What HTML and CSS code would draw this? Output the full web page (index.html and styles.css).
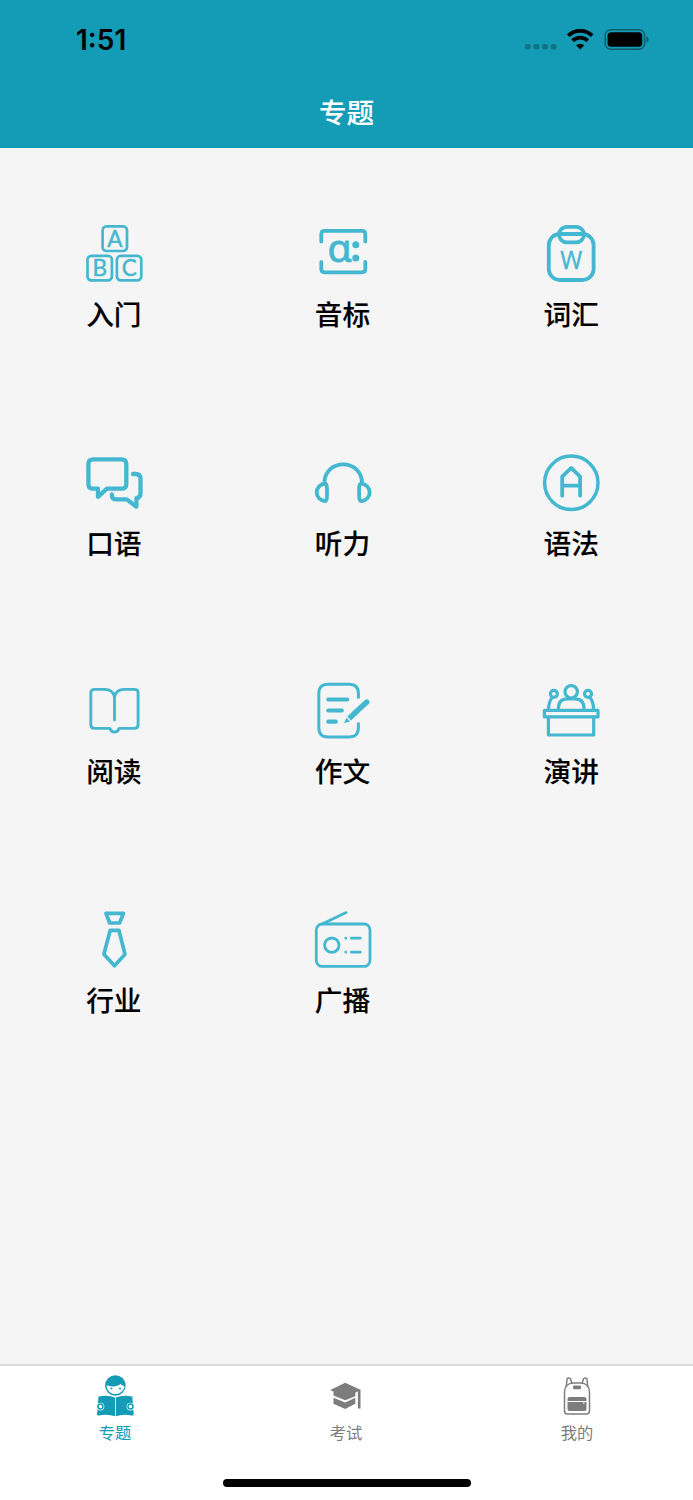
FILE: index.html
```html
<!DOCTYPE html>
<html lang="zh-CN">
<head>
    <meta charset="UTF-8">
    <meta name="viewport" content="width=device-width, initial-scale=1.0">
    <title>专题</title>
    <link rel="stylesheet" href="styles.css">
</head>
<body>
    <header>
        <div class="status-bar">
            <span class="time">1:51</span>
            <svg class="status-icons" width="126" height="24" viewBox="0 0 126 24">
                <g class="signal">
                    <rect x="2" y="16" width="5.6" height="5.4" rx="1.6"/>
                    <rect x="10.6" y="16" width="5.6" height="5.4" rx="1.6"/>
                    <rect x="19.2" y="16" width="5.6" height="5.4" rx="1.6"/>
                    <rect x="27.8" y="16" width="5.6" height="5.4" rx="1.6"/>
                </g>
                <g class="wifi">
                    <path d="M45.2 7.6a17.5 17.5 0 0 1 24 0"/>
                    <path d="M49.6 12.6a11 11 0 0 1 15.2 0"/>
                    <path class="solid" d="M57.2 21.4l-4-4.1a5.7 5.7 0 0 1 8 0z"/>
                </g>
                <rect class="battery" x="82.2" y="1.8" width="39.4" height="19.4" rx="5.6"/>
                <rect x="84.6" y="4.2" width="34.6" height="14.6" rx="3.6"/>
                <path class="nub" d="M123.4 8.2q2.2 1 2.2 3.3t-2.2 3.3z"/>
            </svg>
        </div>
        <h1>专题</h1>
    </header>

    <!-- Topics -->
    <main class="grid">
        <a class="topic">
            <svg viewBox="0 0 57 57" stroke-width="2.7">
                <rect x="16.6" y="1.4" width="24.4" height="24.6" rx="3.8"/>
                <rect x="1.5" y="30.8" width="24.4" height="24.6" rx="3.8"/>
                <rect x="30.9" y="30.8" width="24.4" height="24.6" rx="3.8"/>
                <text class="block-letter" x="28.8" y="22">A</text>
                <text class="block-letter" x="13.7" y="50.8">B</text>
                <text class="block-letter" x="43.2" y="50.8">C</text>
            </svg>
            <span>入门</span>
        </a>
        <a class="topic">
            <svg viewBox="0 0 57 57" stroke-width="3.8">
                <path d="M6.3 16.6V9.2q0-3.3 3.3-3.3h37.4q3.3 0 3.3 3.3v7.4M6.3 36.8v7.3q0 3.3 3.3 3.3h37.4q3.3 0 3.3-3.3v-7.3"/>
                <text class="alpha" x="24.5" y="37.4">ɑ</text>
                <circle class="fill" cx="40.8" cy="19.8" r="3.5"/>
                <circle class="fill" cx="40.8" cy="33" r="3.5"/>
            </svg>
            <span>音标</span>
        </a>
        <a class="topic">
            <svg viewBox="0 0 57 57" stroke-width="3.8">
                <rect x="5.8" y="9" width="44.8" height="46" rx="11"/>
                <rect x="16.1" y="1.9" width="24.8" height="15.4" rx="7.5"/>
                <text class="word" x="28.3" y="44.4" textLength="22" lengthAdjust="spacingAndGlyphs">W</text>
            </svg>
            <span>词汇</span>
        </a>
        <a class="topic">
            <svg viewBox="0 0 57 57" stroke-width="4.3">
                <path d="M7.2 5.4h28.3q4.8 0 4.8 4.8v19.7q0 4.8-4.8 4.8H20.9l-8.9 8.1v-8.1H7.2q-4.8 0-4.8-4.8V10.2q0-4.8 4.8-4.8z"/>
                <path d="M47 20h2.7q4.8 0 4.8 4.8v14.6q0 4.2-4.1 4.8v8.5l-9.6-7.3H30.6q-4.8 0-4.8-5"/>
            </svg>
            <span>口语</span>
        </a>
        <a class="topic">
            <svg viewBox="0 0 57 57" stroke-width="3.8">
                <path d="M9.4 29C9.4 17.5 18.1 10.3 28.2 10.3S47 17.5 47 29"/>
                <path d="M9.9 29.6C5.2 30 1.7 34 1.7 38.4s3.500 8.400 8.200 8.800q2.100 0 2.100-6v-6q0-6-2.100-5.600z"/>
                <path d="M46.500 29.6c4.700.4 8.100 4.400 8.100 8.800s-3.400 8.400-8.100 8.800q-2.400 0-2.400-6v-6q0-6 2.400-5.600z"/>
            </svg>
            <span>听力</span>
        </a>
        <a class="topic">
            <svg viewBox="0 0 57 57" stroke-width="3.8">
                <circle cx="28.3" cy="28.8" r="26.7" stroke-width="3.5"/>
                <path d="M19.2 41.7V22.6l9-8.7 8.9 8.7v19.1M19.2 31.6h17.9"/>
            </svg>
            <span>语法</span>
        </a>
        <a class="topic">
            <svg viewBox="0 0 57 57" stroke-width="2.9">
                <path d="M28.5 14.5C27.2 10 23.5 7.4 19 7.4H8.4q-3.6 0-3.6 3.6v31.8q0 3.6 3.6 3.6h15.4q1.5 3.7 4.7 3.7t4.7-3.7h15.3q3.6 0 3.6-3.6V11q0-3.6-3.6-3.6H38c-4.5 0-8.2 2.6-9.5 7.1z"/>
                <path d="M28.5 14v24"/>
            </svg>
            <span>阅读</span>
        </a>
        <a class="topic">
            <svg viewBox="0 0 57 57" stroke-width="3">
                <path stroke-linecap="butt" d="M43.4 16.5V11.5Q43.4 2.2 34.1 2.2H12.9Q3.8 2.2 3.8 11.5V45.8Q3.8 55 12.9 55H34.1Q43.4 55 43.4 45.8V40.5"/>
                <path stroke-width="4.2" d="M13.3 17.5h19M13.3 28.5h13.5M13.3 39.7h7.5"/>
                <path stroke-width="5.4" d="M51.8 20L39.6 31.3"/>
                <path stroke-width="5.4" stroke-linecap="butt" d="M41.6 29.5L34.1 36.4"/>
                <path class="fill" d="M29 41.3l2.4-5.6 3.7 3.7z"/>
            </svg>
            <span>作文</span>
        </a>
        <a class="topic">
            <svg viewBox="0 0 57 57" stroke-width="3.2">
                <circle cx="28.2" cy="9.8" r="6.2"/>
                <path d="M15.4 28v-1.5q0-9.7 9.2-9.7h7.2q9.2 0 9.2 9.7V28"/>
                <circle cx="10.9" cy="11.8" r="3.5"/>
                <circle cx="45" cy="11.8" r="3.5"/>
                <path d="M9.3 15.3Q5.5 20 5.5 28M46.8 15.3Q50.6 20 50.6 28"/>
                <rect x="1.4" y="28.3" width="53.6" height="6.6"/>
                <path d="M5.4 35v18h45.3V35"/>
            </svg>
            <span>演讲</span>
        </a>
        <a class="topic">
            <svg viewBox="0 0 57 57" stroke-width="3.7">
                <path d="M20 2.3h17.5l-3.9 9.7h-9.9z"/>
                <path d="M24.2 19.3h8.7l6.1 24-10.5 11.5L17.9 43.3z"/>
            </svg>
            <span>行业</span>
        </a>
        <a class="topic">
            <svg viewBox="0 0 57 57" stroke-width="2.8">
                <rect x="1.3" y="13" width="53.7" height="42.4" rx="6"/>
                <path d="M7.1 12.9L31.1 1.6"/>
                <circle cx="16.8" cy="34.2" r="7.2"/>
                <path d="M36.3 27.2h9M36.3 41.2h9M30.8 27.2h.01M30.8 41.2h.01"/>
            </svg>
            <span>广播</span>
        </a>
    </main>

    <!-- Tab bar -->
    <nav>
        <div class="tabs">
            <a class="tab active">
                <svg viewBox="0 0 41 42">
                    <circle cx="20.4" cy="10.5" r="10.3"/>
                    <path class="paper" d="M11.6 10.2c6 2 10.8 1.5 14-1.1 1 1.2 2.5 1.8 3.8 2-.4 4.6-4.2 8-9 8s-8.8-3.8-8.8-8.9z"/>
                    <circle cx="16.4" cy="13.4" r="1"/>
                    <circle cx="25" cy="13.4" r="1"/>
                    <path d="M3.5 21.5q9.5-2 16.5 1.1V41.2q-7.2-2.6-15.8-.8l-2.2-.2zM37.3 21.5q-9.5-2-16.5 1.1V41.2q7.2-2.6 15.8-.8l2.2-.2z"/>
                    <circle class="hand" cx="5.4" cy="31.6" r="3.9"/>
                    <circle class="hand" cx="35.5" cy="31.6" r="3.9"/>
                    <circle class="ring" cx="5.4" cy="31.6" r="2.5"/>
                    <circle class="ring" cx="35.5" cy="31.6" r="2.5"/>
                </svg>
                <span>专题</span>
            </a>
            <a class="tab">
                <svg viewBox="0 0 41 42">
                    <path d="M4.2 15L19.2 7.7 34.5 14.8V33.5h-2.6V16.3L29.3 17.7V21.2L19.2 25.3 7.5 20.6V16.6z"/>
                    <path d="M7.5 22.8l11.7 4.6L29.3 22.8v6L19.2 34 7.5 28.8z"/>
                </svg>
                <span>考试</span>
            </a>
            <a class="tab">
                <svg viewBox="0 0 41 42">
                    <path class="outline" d="M7.5 36V17.5C7.5 11.5 11 8 16.5 8h7C29 8 32.5 11.5 32.5 17.5V36q0 3-3 3h-19q-3 0-3-3z"/>
                    <path class="outline" d="M9.2 12L10 4.5q.3-1.9 2.2-1.4l1.3.6 1.5 4.7M30.8 12L30 4.5q-.3-1.9-2.2-1.4l-1.3.6-1.5 4.7"/>
                    <rect x="16" y="10.5" width="8" height="3.8" rx="1.3"/>
                    <path d="M10.5 25.9v-1.8q0-2.1 2.1-2.1h14.8q2.1 0 2.1 2.1v1.8zM10.5 27h19v7q0 2.1-2.1 2.1H12.6q-2.1 0-2.1-2.1z"/>
                    <path class="zip" d="M26.8 27.2v1.5"/>
                </svg>
                <span>我的</span>
            </a>
        </div>
        <div class="home-indicator"></div>
    </nav>
</body>
</html>
```
FILE: styles.css
```css
* {
    box-sizing: border-box;
}
body {
    font-family: "Noto Sans CJK SC", sans-serif;
    margin: 0;
    height: 1500px;
    display: flex;
    flex-direction: column;
    background: #f5f5f5;
    color: #000;
}
header {
    height: 148px;
    background: #149bb6;
}
.status-bar {
    height: 77px;
    padding: 28px 44px 0 76px;
    display: flex;
    justify-content: space-between;
}
.time {
    font-family: Inter, sans-serif;
    font-size: 28px;
    font-weight: 600;
    line-height: 24px;
}
.signal {
    opacity: 0.25;
}
.wifi {
    fill: none;
    stroke: #000;
    stroke-width: 3.8;
}
.wifi .solid {
    fill: #000;
    stroke: none;
}
.battery {
    fill: none;
    stroke: #000;
    stroke-opacity: 0.4;
    stroke-width: 1.5;
}
.nub {
    opacity: 0.4;
}
h1 {
    margin: 0;
    color: #fff;
    font-size: 27.5px;
    font-weight: 500;
    line-height: 68px;
    text-align: center;
    -webkit-text-stroke: 0.1px;
}
.grid {
    flex: 1;
    display: grid;
    grid-template-columns: repeat(3, 33%);
    grid-auto-rows: 228.7px;
}
.topic {
    padding-top: 77px;
    display: flex;
    flex-direction: column;
    align-items: center;
}
.topic svg {
    width: 57px;
    height: 57px;
    overflow: visible;
    fill: none;
    stroke: #45b8d1;
    stroke-linecap: round;
    stroke-linejoin: round;
}
.topic span {
    margin-top: 11px;
    padding-right: 1px;
    font-size: 27.7px;
    font-weight: 500;
    line-height: 40px;
    -webkit-text-stroke: 0.1px;
}
.topic text {
    fill: #45b8d1;
    text-anchor: middle;
}
.topic .fill {
    fill: #45b8d1;
    stroke: none;
}
.block-letter {
    font-family: Lato, sans-serif;
    font-size: 22.5px;
    stroke-width: 0.5;
}
.alpha {
    font-family: "Noto Sans", sans-serif;
    font-size: 39px;
    stroke-width: 0.9;
}
.word {
    font-family: "Noto Sans", sans-serif;
    font-size: 26px;
    stroke-width: 0.3;
}
nav {
    height: 136px;
    background: #fff;
    border-top: 2px solid #dcdcdc;
}
.tabs {
    height: 113px;
    display: flex;
}
.tab {
    flex: 1;
    padding-top: 9px;
    display: flex;
    flex-direction: column;
    align-items: center;
    color: #7d7d7d;
    fill: #7d7d7d;
}
.tab.active {
    color: #149bb6;
    fill: #149bb6;
}
.tab svg {
    width: 41px;
    height: 42px;
}
.tab span {
    margin-top: 3px;
    padding-right: 1px;
    font-size: 16.3px;
    line-height: 24px;
}
.paper,
.hand {
    fill: #fff;
}
.ring {
    fill: none;
    stroke: #149bb6;
    stroke-width: 1.5;
}
.outline {
    fill: none;
    stroke: #7d7d7d;
    stroke-width: 1.5;
}
.zip {
    stroke: #fff;
    stroke-width: 1.2;
}
.home-indicator {
    width: 248px;
    height: 8px;
    margin: 0 auto;
    border-radius: 4px;
    background: #000;
}
```
